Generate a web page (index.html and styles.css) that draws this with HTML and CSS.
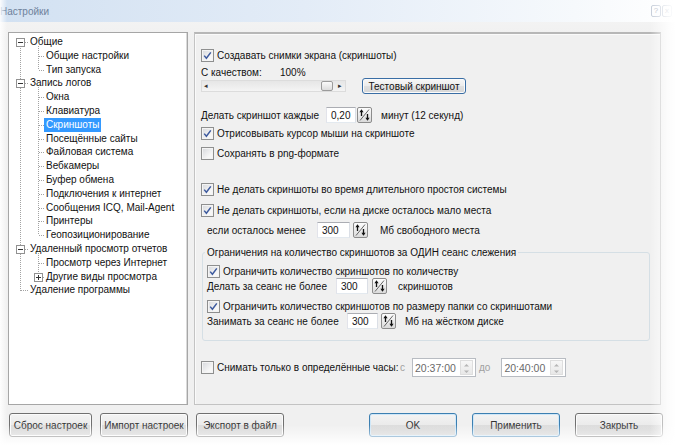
FILE: index.html
```html
<!DOCTYPE html>
<html>
<head>
<meta charset="UTF-8">
<title>Настройки</title>
<link rel="stylesheet" href="styles.css">
</head>
<body>
<div class="window">
	<div class="titlebar">
		<span class="title">Настройки</span>
		<span class="capbtns"><span class="capbtn">?</span><span class="capbtn">x</span></span>
	</div>

	<div class="main">
		<!-- дерево разделов -->
		<div class="tree">
			<svg class="tree-lines" width="60" height="270" viewBox="0 0 60 270">
				<g fill="none" stroke="#a3a3a3" stroke-dasharray="1 1">
					<path d="M11.5 9V258"/>
					<path d="M16 9.5H20M16 50.5H20M16 216.5H20M12 257.5H20"/>
					<path d="M29.5 13V37M29.5 54V202M29.5 220V244"/>
					<path d="M30 23.5H36M30 37.5H36M30 64.5H36M30 78.5H36M30 92.5H36M30 106.5H36M30 119.5H36M30 133.5H36M30 147.5H36M30 161.5H36M30 175.5H36M30 188.5H36M30 202.5H36M30 230.5H36M34 244.5H36"/>
				</g>
				<g fill="#fff" stroke="#919191">
					<rect x="7.5" y="5.5" width="8" height="8"/>
					<rect x="7.5" y="46.5" width="8" height="8"/>
					<rect x="7.5" y="212.5" width="8" height="8"/>
					<rect x="25.5" y="240.5" width="8" height="8"/>
				</g>
				<g fill="none" stroke="#333">
					<path d="M9 9.5H14M9 50.5H14M9 216.5H14"/>
					<path d="M27 244.5H32M29.5 242V247"/>
				</g>
			</svg>
			<div class="node l0">Общие</div>
			<div class="node l1">Общие настройки</div>
			<div class="node l1">Тип запуска</div>
			<div class="node l0">Запись логов</div>
			<div class="node l1">Окна</div>
			<div class="node l1">Клавиатура</div>
			<div class="node l1"><span class="sel">Скриншоты</span></div>
			<div class="node l1">Посещённые сайты</div>
			<div class="node l1">Файловая система</div>
			<div class="node l1">Вебкамеры</div>
			<div class="node l1">Буфер обмена</div>
			<div class="node l1">Подключения к интернет</div>
			<div class="node l1">Сообщения ICQ, Mail-Agent</div>
			<div class="node l1">Принтеры</div>
			<div class="node l1">Геопозиционирование</div>
			<div class="node l0">Удаленный просмотр отчетов</div>
			<div class="node l1">Просмотр через Интернет</div>
			<div class="node l1">Другие виды просмотра</div>
			<div class="node l0">Удаление программы</div>
		</div>

		<!-- страница "Скриншоты" -->
		<div class="panel">
			<div class="row h14">
				<span class="box"><svg width="9" height="9" viewBox="0 0 9 9"><path d="M1.2 4.6 3.4 7.3 7.8 1.4" fill="none" stroke="#3d5a9e" stroke-width="1.5"/></svg></span>
				Создавать снимки экрана (скриншоты)
			</div>
			<div class="row h12 gap4">
				<span class="lbl w79">С качеством:</span>100%
			</div>
			<div class="row h16">
				<div class="slider">
					<span class="arr">&#9666;</span>
					<span class="thumb"></span>
					<span class="arr">&#9656;</span>
				</div>
				<span class="btn test">Тестовый скриншот</span>
			</div>
			<div class="row h16 gap13">
				<span class="lbl w125">Делать скриншот каждые</span>
				<span class="edit w30">0,20</span>
				<span class="spin ml1"><svg width="13" height="14" viewBox="0 0 13 14"><path d="M2 12.5 11 1.5" stroke="#666" fill="none"/><path d="M3.5 3V8M9.5 6V11.5" stroke="#111" stroke-width="1.3"/><path d="M1.4 4.2 3.5 1.2 5.6 4.2ZM7.4 9.8 9.5 12.8 11.6 9.8Z" fill="#111"/></svg></span>
				<span class="after ml9">минут (12 секунд)</span>
			</div>
			<div class="row h14 gap3">
				<span class="box"><svg width="9" height="9" viewBox="0 0 9 9"><path d="M1.2 4.6 3.4 7.3 7.8 1.4" fill="none" stroke="#3d5a9e" stroke-width="1.5"/></svg></span>
				Отрисовывать курсор мыши на скриншоте
			</div>
			<div class="row h14 gap6">
				<span class="box"></span>
				Сохранять в png-формате
			</div>
			<div class="row h14 gap22">
				<span class="box"><svg width="9" height="9" viewBox="0 0 9 9"><path d="M1.2 4.6 3.4 7.3 7.8 1.4" fill="none" stroke="#3d5a9e" stroke-width="1.5"/></svg></span>
				Не делать скриншоты во время длительного простоя системы
			</div>
			<div class="row h14 gap7">
				<span class="box"><svg width="9" height="9" viewBox="0 0 9 9"><path d="M1.2 4.6 3.4 7.3 7.8 1.4" fill="none" stroke="#3d5a9e" stroke-width="1.5"/></svg></span>
				Не делать скриншоты, если на диске осталось мало места
			</div>
			<div class="row h16 gap5 indent">
				<span class="lbl w110">если осталось менее</span>
				<span class="edit w33">300</span>
				<span class="spin ml3"><svg width="13" height="14" viewBox="0 0 13 14"><path d="M2 12.5 11 1.5" stroke="#666" fill="none"/><path d="M3.5 3V8M9.5 6V11.5" stroke="#111" stroke-width="1.3"/><path d="M1.4 4.2 3.5 1.2 5.6 4.2ZM7.4 9.8 9.5 12.8 11.6 9.8Z" fill="#111"/></svg></span>
				<span class="after ml12">Мб свободного места</span>
			</div>

			<div class="group">
				<div class="group-title">Ограничения на количество скриншотов за ОДИН сеанс слежения</div>
				<div class="row h13 gap5">
					<span class="box"><svg width="9" height="9" viewBox="0 0 9 9"><path d="M1.2 4.6 3.4 7.3 7.8 1.4" fill="none" stroke="#3d5a9e" stroke-width="1.5"/></svg></span>
					Ограничить количество скриншотов по количеству
				</div>
				<div class="row h16">
					<span class="lbl w129">Делать за сеанс не более</span>
					<span class="edit w32">300</span>
					<span class="spin ml4"><svg width="13" height="14" viewBox="0 0 13 14"><path d="M2 12.5 11 1.5" stroke="#666" fill="none"/><path d="M3.5 3V8M9.5 6V11.5" stroke="#111" stroke-width="1.3"/><path d="M1.4 4.2 3.5 1.2 5.6 4.2ZM7.4 9.8 9.5 12.8 11.6 9.8Z" fill="#111"/></svg></span>
					<span class="after ml11">скриншотов</span>
				</div>
				<div class="row h13 gap6">
					<span class="box"><svg width="9" height="9" viewBox="0 0 9 9"><path d="M1.2 4.6 3.4 7.3 7.8 1.4" fill="none" stroke="#3d5a9e" stroke-width="1.5"/></svg></span>
					Ограничить количество скриншотов по размеру папки со скриншотами
				</div>
				<div class="row h16">
					<span class="lbl w140">Занимать за сеанс не более</span>
					<span class="edit w31">300</span>
					<span class="spin ml3"><svg width="13" height="14" viewBox="0 0 13 14"><path d="M2 12.5 11 1.5" stroke="#666" fill="none"/><path d="M3.5 3V8M9.5 6V11.5" stroke="#111" stroke-width="1.3"/><path d="M1.4 4.2 3.5 1.2 5.6 4.2ZM7.4 9.8 9.5 12.8 11.6 9.8Z" fill="#111"/></svg></span>
					<span class="after ml9">Мб на жёстком диске</span>
				</div>
			</div>

			<div class="row h19 gap17">
				<span class="lbl w199"><span class="box"></span>Снимать только в определённые часы:</span>
				<span class="dim">с</span>
				<span class="time ml7">20:37:00<span class="tspin"><svg width="11" height="15" viewBox="0 0 11 15"><path d="M3 5.5 5.5 3 8 5.5ZM3 9.5 5.5 12 8 9.5Z" fill="#b5b5b5"/></svg></span></span>
				<span class="dim ml3">до</span>
				<span class="time ml11">20:40:00<span class="tspin"><svg width="11" height="15" viewBox="0 0 11 15"><path d="M3 5.5 5.5 3 8 5.5ZM3 9.5 5.5 12 8 9.5Z" fill="#b5b5b5"/></svg></span></span>
			</div>
		</div>
	</div>

	<div class="footer">
		<div class="btns">
			<span class="btn b83">Сброс настроек</span>
			<span class="btn b88">Импорт настроек</span>
			<span class="btn b88">Экспорт в файл</span>
		</div>
		<div class="btns right">
			<span class="btn b88 def">OK</span>
			<span class="btn b88 def">Применить</span>
			<span class="btn b88">Закрыть</span>
		</div>
	</div>
</div>
</body>
</html>
```

FILE: styles.css
```css
* {
	box-sizing: border-box;
}
html, body {
	margin: 0;
}
body {
	width: 676px;
	height: 445px;
	overflow: hidden;
	background: #fff;
	color: #111;
	font: 10px "Liberation Sans", Arial, sans-serif;
}
.window {
	position: relative;
	height: 445px;
	background: linear-gradient(#f6f6f6, #f0f0f0 40px);
}
/* размытые края скриншота */
.window::after {
	content: "";
	position: absolute;
	left: 0;
	top: 0;
	right: 0;
	bottom: 0;
	pointer-events: none;
	background:
		linear-gradient(to right, rgba(255,255,255,0.9), rgba(255,255,255,0) 7px),
		linear-gradient(to left, #fff, rgba(255,255,255,0.8) 8px, rgba(255,255,255,0) 26px),
		linear-gradient(to top, #fff, rgba(255,255,255,0.7) 6px, rgba(255,255,255,0) 20px);
}

.titlebar {
	height: 22px;
	display: flex;
	align-items: center;
	justify-content: space-between;
	padding: 0 4px 0 0;
	background: linear-gradient(to right, #d2e1f2, #e3ecf7 45%, #f6f9fc 85%, #fff);
}
.title {
	margin-left: 0;
	color: #6e819b;
	font-size: 10px;
}
.capbtns {
	display: flex;
	gap: 1px;
}
.capbtn {
	width: 10px;
	height: 12px;
	border: 1px solid #c4ccd8;
	border-radius: 2px;
	color: #a9b2c0;
	font-size: 8px;
	line-height: 10px;
	text-align: center;
}

.main {
	display: flex;
	gap: 6px;
	height: 383px;
	padding: 10px 15px 0 8px;
}

/* дерево */
.tree {
	position: relative;
	width: 180px;
	padding-top: 2px;
	border: 1px solid #a6a6a6;
	box-shadow: inset -1px 0 #dadada;
	background: #fff;
}
.tree-lines {
	position: absolute;
	left: 0;
	top: 0;
}
.node {
	height: 13.8px;
	line-height: 13.8px;
	white-space: nowrap;
}
.l0 {
	padding-left: 21px;
}
.l1 {
	padding-left: 37px;
}
.sel {
	display: inline-block;
	margin-left: -2px;
	padding: 0 2px;
	height: 14px;
	background: #3399ff;
	color: #fff;
}

/* правая панель */
.panel {
	flex: 1;
	padding: 14px 0 0 6px;
	border: 1px solid #c3c3c3;
	border-top: 2px solid #b7b7b7;
	box-shadow: inset 0 1px #fafafa, inset 1px 0 #fafafa;
	background: #f0f0f0;
}
.row {
	display: flex;
	align-items: center;
	white-space: nowrap;
}
.h12 { height: 12px; }
.h13 { height: 13px; }
.h14 { height: 14px; }
.h16 { height: 16px; }
.h19 { height: 19px; }
.gap3 { margin-top: 3px; }
.gap4 { margin-top: 4px; }
.gap5 { margin-top: 5px; }
.gap6 { margin-top: 6px; }
.gap7 { margin-top: 7px; }
.gap13 { margin-top: 13px; }
.gap17 { margin-top: 17px; }
.gap22 { margin-top: 22px; }
.indent {
	padding-left: 6px;
}
.lbl {
	display: flex;
	align-items: center;
	flex: none;
}
.w79 { width: 79px; }
.w110 { width: 110px; }
.w125 { width: 125px; }
.w129 { width: 129px; }
.w140 { width: 140px; }
.w199 { width: 199px; }
.ml1 { margin-left: 1px; }
.ml3 { margin-left: 3px; }
.ml4 { margin-left: 4px; }
.ml7 { margin-left: 7px; }
.ml9 { margin-left: 9px; }
.ml11 { margin-left: 11px; }
.ml12 { margin-left: 12px; }

.box {
	display: inline-flex;
	align-items: center;
	justify-content: center;
	flex: none;
	width: 13px;
	height: 13px;
	margin-right: 3px;
	border: 1px solid #8e8f8f;
	background: linear-gradient(135deg, #d6d8dc, #f7f7f7 70%);
	box-shadow: inset 0 0 0 1px #f4f4f4;
}

.slider {
	display: flex;
	align-items: center;
	justify-content: space-between;
	width: 145px;
	height: 12px;
	padding: 0 3px 0 2px;
	border: 1px solid #dcdcdc;
	background: linear-gradient(#e6e6e6, #f4f4f4);
	color: #333;
	font-size: 7px;
}
.slider .thumb {
	width: 12px;
	height: 10px;
	margin-left: auto;
	margin-right: 5px;
	border: 1px solid #9b9b9b;
	border-radius: 2px;
	background: linear-gradient(#fafafa, #dcdcdc);
}

.btn {
	display: inline-flex;
	align-items: center;
	justify-content: center;
	border: 1px solid #707070;
	border-radius: 3px;
	background: linear-gradient(#f3f3f3, #ebebeb 50%, #dddddd 50%, #cfcfcf);
	box-shadow: inset 0 0 0 1px #fbfbfb;
	color: #111;
	white-space: nowrap;
}
.btn.test {
	width: 104px;
	height: 16px;
	margin-left: 16px;
	border-color: #3a6ea5;
	background: linear-gradient(#f7f7f7, #ececec 50%, #e0e0e0 50%, #d6d6d6);
}

.edit {
	display: inline-flex;
	align-items: center;
	flex: none;
	height: 16px;
	padding-left: 4px;
	border: 1px solid #abadb3;
	border-color: #abadb3 #dbdfe6 #e3e9ef #e2e3ea;
	background: #fff;
}
.w30 { width: 30px; }
.w31 { width: 31px; }
.w32 { width: 32px; }
.w33 { width: 33px; }

.spin {
	display: inline-flex;
	flex: none;
	width: 15px;
	height: 16px;
	border: 1px solid #8c8c8c;
	border-radius: 2px;
	background: linear-gradient(#fdfdfd, #dadada);
}

.group {
	margin: 14px 10px 0 1px;
	padding: 0 0 11px 4px;
	border: 1px solid #d5dfe5;
	border-radius: 3px;
}
.group-title {
	width: fit-content;
	height: 14px;
	margin: -7px 0 0 -2px;
	padding: 0 2px;
	line-height: 14px;
	background: #f0f0f0;
}

.dim {
	color: #a0a0a0;
}
.time {
	display: inline-flex;
	align-items: center;
	justify-content: space-between;
	width: 64px;
	height: 19px;
	padding: 0 2px 0 2px;
	border: 1px solid #b8bcc2;
	background: #fff;
	color: #6a6a6a;
	font-size: 10.5px;
}
.time + .dim + .time {
	width: 65px;
}
.tspin {
	display: inline-flex;
	width: 13px;
	height: 15px;
	border: 1px solid #dedede;
	background: linear-gradient(#f7f7f7, #e8e8e8);
}

/* кнопки внизу */
.footer {
	display: flex;
	justify-content: space-between;
	padding: 8px 13px 0 9px;
}
.btns {
	display: flex;
	gap: 8px;
}
.btns.right {
	gap: 15px;
}
.footer .btn {
	height: 24px;
	color: #333;
}
.b83 { width: 83px; }
.b88 { width: 88px; }
.btn.def {
	border-color: #3c7fb1;
	box-shadow: inset 0 0 0 1px #cfe7f8;
}
```
